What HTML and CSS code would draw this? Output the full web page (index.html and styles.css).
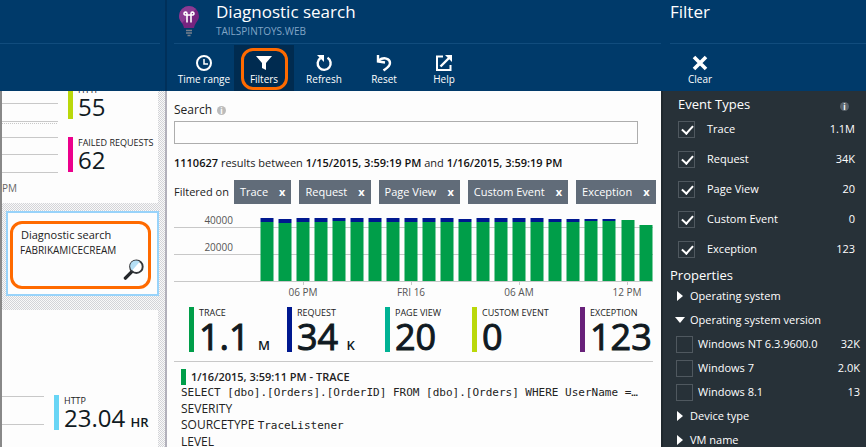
FILE: index.html
```
<!DOCTYPE html>
<html lang="en">
<head>
<meta charset="utf-8">
<title>Diagnostic search</title>
<link rel="stylesheet" href="styles.css">
</head>
<body>
<div class="portal">
  <aside class="blade overview">
    <header class="blade-head"><div class="title-row"></div></header>
    <div class="overview-body">
      <section class="tile tile-requests">
        <div class="lines">
          <svg class="grid" viewBox="0 0 56 82" preserveAspectRatio="none" aria-hidden="true">
            <path d="M0 12.5H56M0 30.5H56M0 46.5H56M0 63.5H56M0 81.5H56" stroke="#c8c8c8"/>
            <path d="M0 32.5H56" stroke="#c8c8c8" stroke-dasharray="1 1"/>
          </svg>
          <span class="axis">PM</span>
        </div>
        <div class="stack">
          <div class="metric lime"><span class="label">HTTP</span><span class="value">55</span></div>
          <div class="metric pink"><span class="label">FAILED REQUESTS</span><span class="value">62</span></div>
        </div>
      </section>
      <a class="tile-link" href="#search">
        <span class="link-title">Diagnostic search</span>
        <span class="link-sub">FABRIKAMICECREAM</span>
        <svg class="lens" viewBox="0 0 22 22" aria-hidden="true">
          <path d="M2 20 9 13" stroke="#25282b" stroke-width="3.6" stroke-linecap="round"/>
          <circle cx="13.5" cy="8" r="6.6" fill="#fff" stroke="#33363a" stroke-width="2"/>
          <path d="M9 12a6 6 0 0 1 8-9z" fill="#b5dff5"/>
        </svg>
      </a>
      <section class="tile tile-duration">
        <svg class="grid-small" viewBox="0 0 42 30" preserveAspectRatio="none" aria-hidden="true">
          <path d="M0 1.5H42M0 29.5H42" stroke="#c8c8c8"/>
        </svg>
        <div class="metric sky"><span class="label">HTTP</span><span class="value">23.04 <small>HR</small></span></div>
      </section>
    </div>
  </aside>

  <main class="blade search" id="search">
    <header class="blade-head">
      <div class="title-row">
        <svg class="bulb" viewBox="0 0 22 32" aria-hidden="true">
          <path d="M11 1a10 10 0 0 0-10 10c0 5 4 6.500 5 12h10c1-5.500 5-7 5-12A10 10 0 0 0 11 1z" fill="#75247f"/>
          <path d="M11 1a10 10 0 0 0-10 10c0 3 1.500 5 3 7L18 4a10 10 0 0 0-7-3z" fill="#8a3b93"/>
          <path d="M9 17.500V10M13 17.500V10M9 10H7a1.500 1.500 0 1 1 2-1.500V10h4V8.500A1.500 1.500 0 1 1 15 10h-2" fill="none" stroke="#fff" stroke-width="1.600"/>
          <path d="M8 25.500h6M8 28h6M9.500 30.500h3" stroke="#77818d" stroke-width="1.500"/>
        </svg>
        <div>
          <h1>Diagnostic search</h1>
          <p class="subtitle">TAILSPINTOYS.WEB</p>
        </div>
      </div>
      <nav class="toolbar">
        <button type="button"><svg viewBox="0 0 18 18"><circle cx="9" cy="9" r="7" fill="none" stroke="#fff" stroke-width="2"/><path d="M9 5v5h4" fill="none" stroke="#fff" stroke-width="1.500"/></svg>Time range</button>
        <button type="button" class="active"><svg viewBox="0 0 18 18"><path d="M1 2h16l-6 7v7l-4-2V9z" fill="#fff"/></svg>Filters</button>
        <button type="button"><svg viewBox="0 0 18 18"><path d="M5.500 4A6.500 6.500 0 1 0 12.500 3.800" fill="none" stroke="#fff" stroke-width="2.400"/><path d="M2 1h7v7z" fill="#fff"/></svg>Refresh</button>
        <button type="button"><svg viewBox="0 0 18 18"><path d="M3.500 6.500C9 2.500 15 4.500 15 9c0 3.500-3 5-6.500 7.500" fill="none" stroke="#fff" stroke-width="2.400"/><path d="M3 1v6.500l7 1" fill="none" stroke="#fff" stroke-width="2.400"/></svg>Reset</button>
        <button type="button"><svg viewBox="0 0 18 18"><path d="M8 2.500H2v13.500h13.500V11" fill="none" stroke="#fff" stroke-width="2"/><path d="M10 1h7v7z" fill="#fff"/><path d="M5.500 12.500 14 4" stroke="#fff" stroke-width="2.400"/></svg>Help</button>
      </nav>
    </header>
    <div class="search-body">
      <label class="search-label" for="q">Search <span class="info">i</span></label>
      <input class="query" id="q" type="text">
      <p class="results"><b>1110627</b> results between <b>1/15/2015, 3:59:19 PM</b> and <b>1/16/2015, 3:59:19 PM</b></p>
      <div class="chips">
        <span>Filtered on</span>
        <button type="button">Trace <b>x</b></button>
        <button type="button">Request <b>x</b></button>
        <button type="button">Page View <b>x</b></button>
        <button type="button">Custom Event <b>x</b></button>
        <button type="button">Exception <b>x</b></button>
      </div>
      <svg class="chart" viewBox="0 0 479 90" role="img" aria-label="Events over time">
        <path d="M0 17.500H479M0 44.500H479M0 71.500H479" stroke="#c8c8c8"/>
        <path d="M129.500 71v4M237.500 71v4M345.500 71v4M453.500 71v4" stroke="#c8c8c8"/>
        <g id="bars"></g>
        <g class="ticks">
          <text x="59" y="14" text-anchor="end">40000</text>
          <text x="59" y="41" text-anchor="end">20000</text>
          <text x="129" y="86" text-anchor="middle">06 PM</text>
          <text x="237" y="86" text-anchor="middle">FRI 16</text>
          <text x="345" y="86" text-anchor="middle">06 AM</text>
          <text x="453" y="86" text-anchor="middle">12 PM</text>
        </g>
      </svg>
      <div class="totals">
        <div class="metric big green"><span class="label">TRACE</span><span class="value">1.1 <small>M</small></span></div>
        <div class="metric big navy"><span class="label">REQUEST</span><span class="value">34 <small>K</small></span></div>
        <div class="metric big teal"><span class="label">PAGE VIEW</span><span class="value">20</span></div>
        <div class="metric big lime"><span class="label">CUSTOM EVENT</span><span class="value">0</span></div>
        <div class="metric big purple"><span class="label">EXCEPTION</span><span class="value">123</span></div>
      </div>
      <article class="entry">
        <h2>1/16/2015, 3:59:11 PM - TRACE</h2>
        <p class="code">SELECT [dbo].[Orders].[OrderID] FROM [dbo].[Orders] WHERE UserName =…</p>
        <p>SEVERITY</p>
        <p>SOURCETYPE <span class="code">TraceListener</span></p>
        <p>LEVEL</p>
      </article>
    </div>
  </main>

  <aside class="blade filter">
    <header class="blade-head">
      <div class="title-row"><h1>Filter</h1></div>
      <nav class="toolbar">
        <button type="button"><svg viewBox="0 0 18 18"><path d="M3 3 15 15M15 3 3 15" stroke="#fff" stroke-width="3.600"/></svg>Clear</button>
      </nav>
    </header>
    <div class="filter-body">
      <div class="types">
        <h2>Event Types <span class="info dark">i</span></h2>
        <label><input type="checkbox" checked><span>Trace</span><output>1.1M</output></label>
        <label><input type="checkbox" checked><span>Request</span><output>34K</output></label>
        <label><input type="checkbox" checked><span>Page View</span><output>20</output></label>
        <label><input type="checkbox" checked><span>Custom Event</span><output>0</output></label>
        <label><input type="checkbox" checked><span>Exception</span><output>123</output></label>
      </div>
      <div class="props">
        <h2>Properties</h2>
        <button type="button" aria-expanded="false">Operating system</button>
        <button type="button" aria-expanded="true">Operating system version</button>
        <label><input type="checkbox"><span>Windows NT 6.3.9600.0</span><output>32K</output></label>
        <label><input type="checkbox"><span>Windows 7</span><output>2.0K</output></label>
        <label><input type="checkbox"><span>Windows 8.1</span><output>13</output></label>
        <button type="button" aria-expanded="false">Device type</button>
        <button type="button" aria-expanded="false">VM name</button>
      </div>
    </div>
  </aside>
</div>
<script src="chart.js"></script>
</body>
</html>
```
FILE: chart.js
```
// One entry per hour: [top of the stack, top of the green part].
const hours = [
  [8, 12], [9, 13], [8, 12], [8, 12], [8, 11], [8, 12], [8, 12], [8, 12],
  [8, 12], [8, 12], [8, 12], [9, 12], [8, 12], [8, 12], [8, 12], [8, 12],
  [9, 12], [9, 12], [9, 11], [9, 11], [10, 10], [15, 15]
];
const base = 71;
const group = document.getElementById('bars');
const rect = (x, top, bottom, fill) => {
  const r = document.createElementNS('http://www.w3.org/2000/svg', 'rect');
  const set = { x: x, y: top, width: 13, height: bottom - top, fill: fill };
  for (const k in set) r.setAttribute(k, set[k]);
  group.appendChild(r);
};
hours.forEach(([top, mid], i) => {
  const x = 86.5 + i * 18 + (i > 19 ? 1 : 0);
  rect(x, mid, base, '#009e49');
  if (mid > top) rect(x, top, mid, '#00188f');
});
```
FILE: styles.css
```
* { box-sizing: border-box; }
body {
  margin: 0;
  font: 12px/16px "Open Sans", "Noto Sans", sans-serif;
  color: #222;
  background: #fdfdfd;
}
h1, h2, p { margin: 0; font-weight: 400; }
button { font: inherit; color: inherit; background: none; border: 0; padding: 0; }
.portal { display: flex; height: 100vh; overflow: hidden; }
.blade { display: flex; flex-direction: column; min-width: 0; }
.overview { flex: 0 0 167px; }
.search { flex: 1; }
.filter { flex: 0 0 205px; }

.blade-head {
  flex: 0 0 91px;
  padding-left: 7px;
  background: #003a6a;
  color: #fff;
}
.overview .blade-head { padding: 0 5px 0 0; border-right: 2px solid #00305a; }
.filter .blade-head { padding-left: 9px; }
.title-row { display: flex; height: 44px; border-bottom: 1px solid #114c7d; }
.bulb { width: 22px; height: 32px; margin: 5px 16px 0 4px; }
h1 { font-size: 17px; line-height: 24px; }
.subtitle { font-size: 10px; line-height: 14px; color: #80a5c6; }
.toolbar { display: flex; padding-top: 1px; }
.toolbar button {
  position: relative;
  display: flex;
  flex-direction: column;
  align-items: center;
  width: 60px;
  height: 46px;
  padding-top: 9px;
  font-size: 10px;
  line-height: 14px;
  font-weight: 500;
  white-space: nowrap;
}
.toolbar svg { width: 18px; height: 18px; }
.toolbar .active { background: #002b50; }
.toolbar .active::after {
  content: "";
  position: absolute;
  inset: 3px 6px 1px 7px;
  border: 3px solid #ff6a00;
  border-radius: 12px;
}

.overview-body {
  flex: 1;
  display: flex;
  flex-direction: column;
  min-height: 0;
  padding-right: 7px;
  overflow: hidden;
  border-left: 2px solid #888;
  border-right: 2px solid #b2b1bb;
  background: repeating-conic-gradient(#d3d4d8 0 25%, #f9f9f9 0 50%) 0 0 / 2px 2px;
}
.tile { background: #fdfdfd; }
.tile-requests { display: flex; gap: 10px; height: 112px; overflow: hidden; }
.lines { flex: none; width: 56px; }
.grid { display: block; width: 100%; height: 82px; }
.axis { display: block; padding-top: 7px; font-size: 10px; color: #666; }
.stack { display: flex; flex-direction: column; gap: 18px; margin-top: -7px; }
.metric { display: flex; flex-direction: column; height: 35px; padding-left: 5px; border-left: 5px solid; white-space: nowrap; }
.metric .label { font-size: 9px; line-height: 11px; color: #222; }
.metric .value { font-size: 24px; line-height: 24px; color: #101a22; }
.metric small { font-size: 13px; font-weight: 600; margin-left: -1px; -webkit-text-stroke: 0; }
.metric.big { height: 45px; }
.big .label { line-height: 12px; }
.big .value { font-size: 36px; line-height: 36px; -webkit-text-stroke: 1px #101a22; }
.lime { border-color: #bad80a; }
.pink { border-color: #ec008c; }
.sky { border-color: #68d5f5; }
.green { border-color: #009e49; }
.navy { border-color: #00188f; }
.teal { border-color: #00b294; }
.purple { border-color: #68217a; }
.tile-link {
  position: relative;
  display: flex;
  flex-direction: column;
  height: 85px;
  margin: 8px -1px 14px 4px;
  padding: 14px 12px;
  border: 2px solid #98d3fa;
  background: #fdfdfd;
  color: #222;
  text-decoration: none;
}
.tile-link::after {
  content: "";
  position: absolute;
  inset: 8px 6px 5px 2px;
  border: 3px solid #ff6a00;
  border-radius: 12px;
}
.link-title { font-size: 11px; line-height: 16px; padding-left: 1px; }
.link-sub { font-size: 10px; line-height: 15px; }
.lens { width: 22px; height: 22px; align-self: flex-end; margin-top: 1px; }
.tile-duration { flex: 1; display: flex; align-items: flex-start; gap: 10px; padding-top: 85px; }
.grid-small { width: 42px; height: 30px; }

.search-body { flex: 1; min-height: 0; overflow: hidden; padding: 11px 8px 0 7px; }
.search-label { display: flex; align-items: center; gap: 5px; font-size: 12px; }
.info {
  width: 9px;
  height: 9px;
  border-radius: 50%;
  background: #bbb;
  color: #fff;
  font-size: 8px;
  line-height: 9px;
  font-weight: 700;
  text-align: center;
}
.query { display: block; width: calc(100% - 15px); height: 23px; margin-top: 3px; border: 1px solid #adadad; background: #fdfdfd; font: inherit; }
.results { margin-top: 11px; font-size: 11px; }
.results b { font-weight: 600; color: #111; }
.chips { display: flex; align-items: center; gap: 8px; margin-top: 9px; font-size: 11px; white-space: nowrap; }
.chips span { margin-right: -3px; }
.chips button { display: flex; justify-content: space-between; gap: 11px; height: 24px; padding: 4px 6px 0; background: #616c79; color: #fff; line-height: 16px; }
.chart { display: block; width: 100%; margin-top: 6px; }
.ticks { font-size: 10px; fill: #555; }
.totals {
  display: grid;
  grid-template-columns: 98fr 98fr 87fr 108fr 73fr;
  margin-top: 7px;
  padding: 0 0 9px 15px;
  border-bottom: 1px solid #c8c8c8;
}
.entry { padding: 7px 7px 0; }
.entry h2 { font-size: 11px; font-weight: 600; line-height: 16px; border-left: 5px solid #009e49; padding-left: 5px; color: #222; }
.entry p { font-size: 12px; line-height: 16px; white-space: nowrap; }
.entry .code { font: 11px/16px "DejaVu Sans Mono", monospace; }

.filter-body { flex: 1; min-height: 0; overflow: hidden; background: #273138; color: #fff; border-left: 2px solid #1f282e; font-size: 11px; }
.filter h2 { font-size: 13px; line-height: 18px; }
.types { padding: 3px 11px 0 15px; }
.types h2 { display: flex; justify-content: space-between; align-items: center; padding: 0 6px 0 0; line-height: 20px; }
.info.dark { background: #5a636b; margin-top: 4px; }
.filter label { display: flex; align-items: center; height: 24px; white-space: nowrap; }
.types label { height: 30px; gap: 12px; }
.filter output { margin-left: auto; }
.filter input {
  appearance: none;
  position: relative;
  flex: none;
  width: 17px;
  height: 17px;
  margin: 0;
  border: 1px solid #4f585f;
}
.filter input:checked::after {
  content: "";
  position: absolute;
  left: 5px;
  top: 1px;
  width: 5px;
  height: 9px;
  border: solid #fff;
  border-width: 0 2px 2px 0;
  transform: rotate(42deg);
}
.props { padding: 2px 6px 0 13px; }
.props h2 { margin-left: -6px; }
.props label { gap: 5px; }
.props button { display: flex; align-items: center; gap: 6px; height: 24px; white-space: nowrap; }
.props button::before {
  content: "";
  width: 6px;
  height: 10px;
  margin: 0 1px 0 1px;
  background: #fff;
  clip-path: polygon(0 0, 100% 50%, 0 100%);
}
.props button[aria-expanded="true"]::before {
  width: 10px;
  height: 6px;
  margin: 0 -1px;
  clip-path: polygon(0 0, 100% 0, 50% 100%);
}
```
